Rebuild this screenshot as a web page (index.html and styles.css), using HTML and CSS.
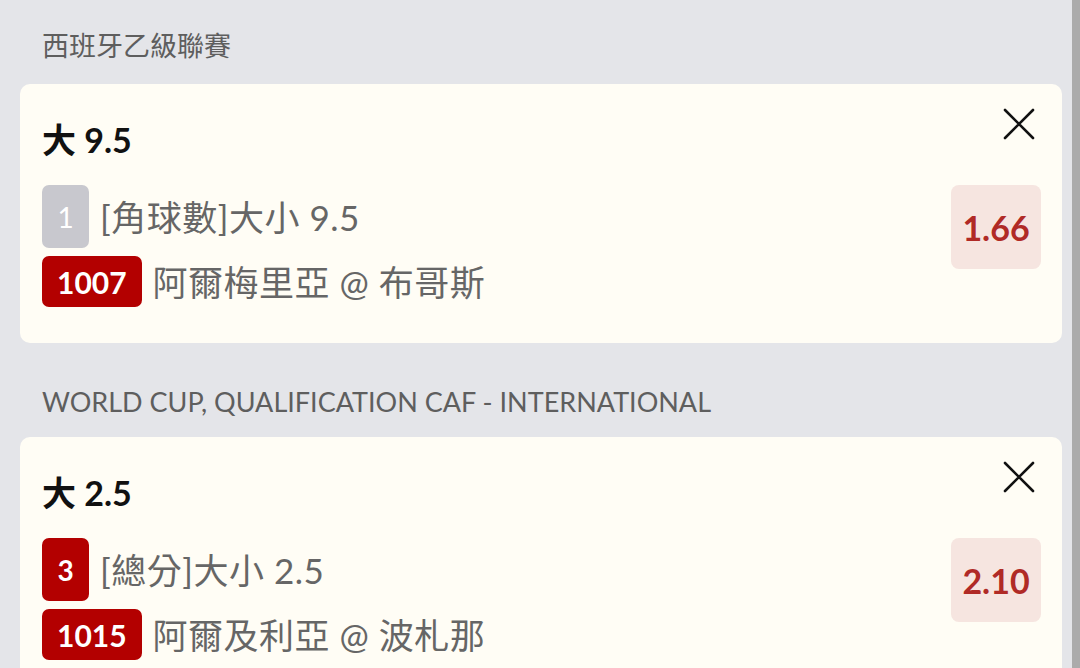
FILE: index.html
```html
<!DOCTYPE html>
<html lang="zh-Hant">
<head>
    <meta charset="UTF-8">
    <meta name="viewport" content="width=device-width, initial-scale=1.0">
    <title>投注單</title>
    <link rel="stylesheet" href="styles.css">
</head>
<body>
    <div class="slip">
        <div class="section">
            <div class="league">西班牙乙級聯賽</div>
            <div class="card">
                <div class="card-main">
                    <div class="title">大 9.5</div>
                    <div class="line">
                        <span class="badge badge-leg grey">1</span>
                        <span class="text">[角球數]大小 9.5</span>
                    </div>
                    <div class="line">
                        <span class="badge badge-match">1007</span>
                        <span class="text match">阿爾梅里亞 @ 布哥斯</span>
                    </div>
                </div>
                <div class="card-side">
                    <button class="close" aria-label="移除">
                        <svg width="32" height="32" viewBox="0 0 32 32"><path d="M2 2 L30 30 M30 2 L2 30" stroke="#111" stroke-width="2.6" fill="none" stroke-linecap="round"/></svg>
                    </button>
                    <div class="odds">1.66</div>
                </div>
            </div>
        </div>

        <div class="section">
            <div class="league">WORLD CUP, QUALIFICATION CAF - INTERNATIONAL</div>
            <div class="card">
                <div class="card-main">
                    <div class="title">大 2.5</div>
                    <div class="line">
                        <span class="badge badge-leg">3</span>
                        <span class="text">[總分]大小 2.5</span>
                    </div>
                    <div class="line">
                        <span class="badge badge-match">1015</span>
                        <span class="text match">阿爾及利亞 @ 波札那</span>
                    </div>
                </div>
                <div class="card-side">
                    <button class="close" aria-label="移除">
                        <svg width="32" height="32" viewBox="0 0 32 32"><path d="M2 2 L30 30 M30 2 L2 30" stroke="#111" stroke-width="2.6" fill="none" stroke-linecap="round"/></svg>
                    </button>
                    <div class="odds">2.10</div>
                </div>
            </div>
        </div>
    </div>
    <div class="scrollbar"></div>
</body>
</html>
```

FILE: styles.css
```css
body {
    margin: 0;
    height: 668px;
    overflow: hidden;
    background-color: #e4e5e9;
    font-family: Lato, "Noto Sans CJK TC", sans-serif;
    color: #666;
}
.slip {
    padding: 0 18px 0 20px;
}
.section {
    margin-bottom: 13px;
}
.league {
    padding: 28px 0 0 22px;
    height: 36px;
    line-height: 36px;
    margin-bottom: 20px;
    font-size: 27px;
    color: #5e5e5e;
}
.section + .section .league {
    margin-bottom: 17px;
}
.card {
    display: flex;
    justify-content: space-between;
    background-color: #fffdf5;
    border-radius: 10px;
    padding: 24px 21px 36px 22px;
}
.card-main {
    display: flex;
    flex-direction: column;
    gap: 8px;
}
.title {
    margin-top: 12px;
    margin-bottom: 17px;
    font-size: 34px;
    line-height: 40px;
    font-weight: 700;
    color: #111;
}
.line {
    display: flex;
    align-items: center;
    gap: 11px;
}
.badge {
    display: flex;
    align-items: center;
    justify-content: center;
    border-radius: 7px;
    color: #fff;
    font-weight: 700;
    background-color: #b30000;
}
.badge-leg {
    width: 47px;
    height: 63px;
    font-size: 28px;
}
.badge-leg.grey {
    background-color: #c8c8ce;
    font-weight: 400;
}
.badge-match {
    height: 51px;
    padding: 0 15px;
    font-size: 30px;
}
.text {
    font-size: 35px;
    line-height: 44px;
    letter-spacing: 0.5px;
}
.card-side {
    display: flex;
    flex-direction: column;
    align-items: flex-end;
}
.close {
    width: 32px;
    height: 32px;
    padding: 0;
    margin-right: 6px;
    border: none;
    background: none;
    cursor: pointer;
}
.close svg {
    display: block;
}
.odds {
    margin-top: 45px;
    width: 90px;
    height: 84px;
    border-radius: 8px;
    background-color: #f6e5e0;
    color: #b02a26;
    font-size: 34px;
    font-weight: 700;
    display: flex;
    align-items: center;
    justify-content: center;
}
.scrollbar {
    position: fixed;
    top: 0;
    right: 0;
    width: 8px;
    height: 100%;
    background-color: #ababab;
}
```
